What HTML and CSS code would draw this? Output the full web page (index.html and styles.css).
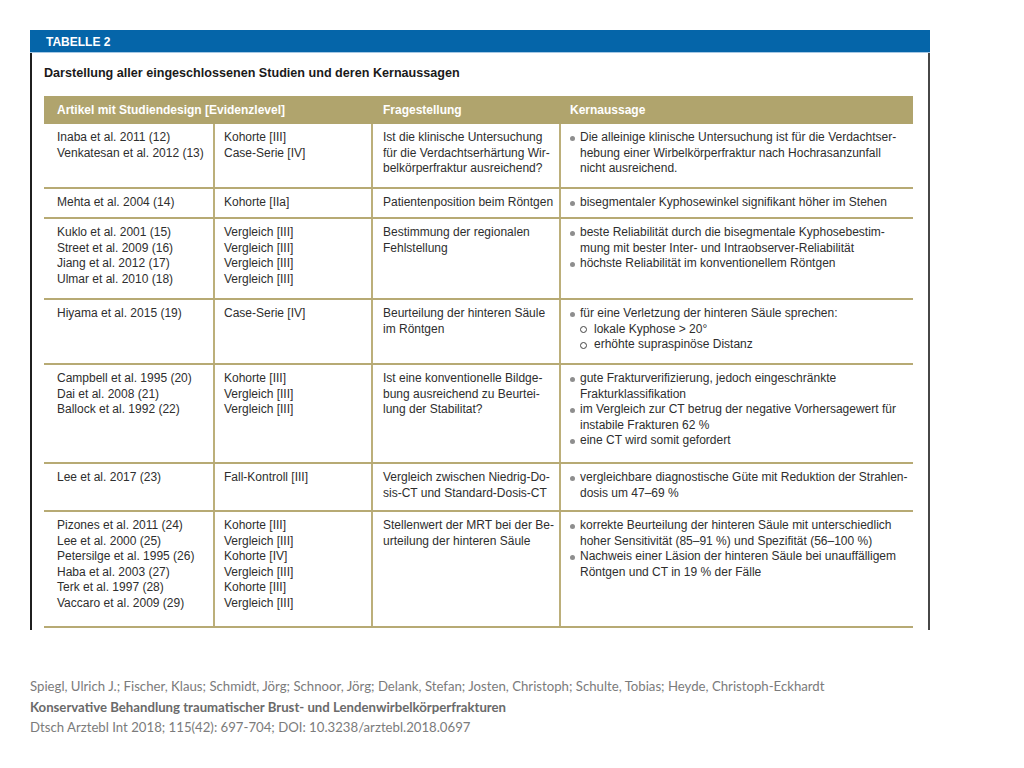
FILE: index.html
```html
<!DOCTYPE html>
<html lang="de">
<head>
<meta charset="utf-8">
<title>Tabelle 2</title>
<link rel="stylesheet" href="styles.css">
</head>
<body>
<div class="page">
  <div class="frame">
    <div class="bar">TABELLE 2</div>
    <div class="panel">
      <div class="subtitle">Darstellung aller eingeschlossenen Studien und deren Kernaussagen</div>
      <div class="table">
        <div class="row head">
          <div class="cell c1">Artikel mit Studiendesign [Evidenzlevel]</div>
          <div class="cell c2"></div>
          <div class="cell c3">Fragestellung</div>
          <div class="cell c4">Kernaussage</div>
        </div>

        <div class="row r1">
          <div class="cell c1">Inaba et al. 2011 (12)<br>Venkatesan et al. 2012 (13)</div>
          <div class="cell c2">Kohorte [III]<br>Case-Serie [IV]</div>
          <div class="cell c3">Ist die klinische Untersuchung<br>für die Verdachtserhärtung Wir-<br>belkörperfraktur ausreichend?</div>
          <div class="cell c4">
            <div class="item"><span class="dot"></span><span>Die alleinige klinische Untersuchung ist für die Verdachtser-<br>hebung einer Wirbelkörperfraktur nach Hochrasanzunfall<br>nicht ausreichend.</span></div>
          </div>
        </div>

        <div class="row r2">
          <div class="cell c1">Mehta et al. 2004 (14)</div>
          <div class="cell c2">Kohorte [IIa]</div>
          <div class="cell c3">Patientenposition beim Röntgen</div>
          <div class="cell c4">
            <div class="item"><span class="dot"></span><span>bisegmentaler Kyphosewinkel signifikant höher im Stehen</span></div>
          </div>
        </div>

        <div class="row r3">
          <div class="cell c1">Kuklo et al. 2001 (15)<br>Street et al. 2009 (16)<br>Jiang et al. 2012 (17)<br>Ulmar et al. 2010 (18)</div>
          <div class="cell c2">Vergleich [III]<br>Vergleich [III]<br>Vergleich [III]<br>Vergleich [III]</div>
          <div class="cell c3">Bestimmung der regionalen<br>Fehlstellung</div>
          <div class="cell c4">
            <div class="item"><span class="dot"></span><span>beste Reliabilität durch die bisegmentale Kyphosebestim-<br>mung mit bester Inter- und Intraobserver-Reliabilität</span></div>
            <div class="item"><span class="dot"></span><span>höchste Reliabilität im konventionellem Röntgen</span></div>
          </div>
        </div>

        <div class="row r4">
          <div class="cell c1">Hiyama et al. 2015 (19)</div>
          <div class="cell c2">Case-Serie [IV]</div>
          <div class="cell c3">Beurteilung der hinteren Säule<br>im Röntgen</div>
          <div class="cell c4">
            <div class="item"><span class="dot"></span><span>für eine Verletzung der hinteren Säule sprechen:</span></div>
            <div class="item sub"><span class="ring"></span><span>lokale Kyphose &gt; 20°</span></div>
            <div class="item sub"><span class="ring"></span><span>erhöhte supraspinöse Distanz</span></div>
          </div>
        </div>

        <div class="row r5">
          <div class="cell c1">Campbell et al. 1995 (20)<br>Dai et al. 2008 (21)<br>Ballock et al. 1992 (22)</div>
          <div class="cell c2">Kohorte [III]<br>Vergleich [III]<br>Vergleich [III]</div>
          <div class="cell c3">Ist eine konventionelle Bildge-<br>bung ausreichend zu Beurtei-<br>lung der Stabilitat?</div>
          <div class="cell c4">
            <div class="item"><span class="dot"></span><span>gute Frakturverifizierung, jedoch eingeschränkte<br>Frakturklassifikation</span></div>
            <div class="item"><span class="dot"></span><span>im Vergleich zur CT betrug der negative Vorhersagewert für<br>instabile Frakturen 62 %</span></div>
            <div class="item"><span class="dot"></span><span>eine CT wird somit gefordert</span></div>
          </div>
        </div>

        <div class="row r6">
          <div class="cell c1">Lee et al. 2017 (23)</div>
          <div class="cell c2">Fall-Kontroll [III]</div>
          <div class="cell c3">Vergleich zwischen Niedrig-Do-<br>sis-CT und Standard-Dosis-CT</div>
          <div class="cell c4">
            <div class="item"><span class="dot"></span><span>vergleichbare diagnostische Güte mit Reduktion der Strahlen-<br>dosis um 47–69 %</span></div>
          </div>
        </div>

        <div class="row r7">
          <div class="cell c1">Pizones et al. 2011 (24)<br>Lee et al. 2000 (25)<br>Petersilge et al. 1995 (26)<br>Haba et al. 2003 (27)<br>Terk et al. 1997 (28)<br>Vaccaro et al. 2009 (29)</div>
          <div class="cell c2">Kohorte [III]<br>Vergleich [III]<br>Kohorte [IV]<br>Vergleich [III]<br>Kohorte [III]<br>Vergleich [III]</div>
          <div class="cell c3">Stellenwert der MRT bei der Be-<br>urteilung der hinteren Säule</div>
          <div class="cell c4">
            <div class="item"><span class="dot"></span><span>korrekte Beurteilung der hinteren Säule mit unterschiedlich<br>hoher Sensitivität (85–91 %) und Spezifität (56–100 %)</span></div>
            <div class="item"><span class="dot"></span><span>Nachweis einer Läsion der hinteren Säule bei unauffälligem<br>Röntgen und CT in 19 % der Fälle</span></div>
          </div>
        </div>
      </div>
    </div>
  </div>

  <div class="citation">
    <p class="authors">Spiegl, Ulrich J.; Fischer, Klaus; Schmidt, Jörg; Schnoor, Jörg; Delank, Stefan; Josten, Christoph; Schulte, Tobias; Heyde, Christoph-Eckhardt</p>
    <p class="paper">Konservative Behandlung traumatischer Brust- und Lendenwirbelkörperfrakturen</p>
    <p class="source">Dtsch Arztebl Int 2018; 115(42): 697-704; DOI: 10.3238/arztebl.2018.0697</p>
  </div>
</div>
</body>
</html>
```

FILE: styles.css
```css
html, body {
  margin: 0;
  padding: 0;
  background: #ffffff;
}

body {
  font-family: "Liberation Sans", Arial, sans-serif;
  color: #2e2e2e;
}

.page {
  padding: 30px 0 0 30px;
}

.frame {
  width: 900px;
  display: flex;
  flex-direction: column;
}

.bar {
  height: 22px;
  line-height: 25px;
  background: #0565a9;
  border-bottom: 1px solid #a6c8e4;
  color: #ffffff;
  font-weight: bold;
  font-size: 12px;
  padding-left: 16px;
  overflow: hidden;
}

.panel {
  height: 577px;
  box-sizing: border-box;
  border-left: 2px solid #1f1f1f;
  border-right: 2px solid #474747;
  padding: 0 15px 0 12px;
  overflow: hidden;
}

.subtitle {
  font-weight: bold;
  font-size: 12.6px;
  line-height: 16px;
  padding-top: 12px;
  margin-bottom: 15px;
  color: #1a1a1a;
}

.table {
  width: 869px;
  font-size: 12px;
  line-height: 15.6px;
}

.row {
  display: grid;
  grid-template-columns: 169px 158px 188px 354px;
  box-sizing: border-box;
  border-bottom: 2px solid #b7aa74;
}

.row.head {
  height: 28px;
  background: #b0a46d;
  border-bottom: none;
  color: #ffffff;
  font-weight: bold;
  font-size: 12px;
}

.row.head .cell {
  border-left-color: transparent;
  padding-top: 0;
  line-height: 28px;
}

.r1 { height: 65px; }
.r2 { height: 30px; }
.r3 { height: 81px; }
.r4 { height: 65px; }
.r5 { height: 99px; }
.r6 { height: 48px; }
.r7 { height: 116px; }

.cell {
  padding-top: 6px;
  white-space: nowrap;
}

.c1 {
  padding-left: 13px;
}

.c2, .c3, .c4 {
  border-left: 2px solid #bcaf7a;
}

.c2 { padding-left: 9px; }
.c3 { padding-left: 10px; }
.c4 { padding-left: 9px; }

.item {
  display: flex;
  align-items: flex-start;
}

.dot {
  flex: 0 0 10px;
  height: 15.6px;
  display: flex;
  align-items: center;
}

.dot::before {
  content: "";
  width: 5px;
  height: 5px;
  margin-top: 1px;
  border-radius: 50%;
  background: #8e8e8e;
}

.item.sub {
  padding-left: 10px;
}

.ring {
  flex: 0 0 14px;
  height: 15.6px;
  display: flex;
  align-items: center;
}

.ring::before {
  content: "";
  width: 5px;
  height: 5px;
  margin-top: 1px;
  border-radius: 50%;
  border: 1px solid #444;
}

.citation {
  padding-top: 46px;
  font-family: Lato, "Open Sans", sans-serif;
  font-size: 13.2px;
  line-height: 20.5px;
  color: #7b7b7b;
}

.citation p {
  margin: 0;
  white-space: nowrap;
}

.citation .paper {
  font-weight: bold;
  color: #6a6a6a;
}
```
